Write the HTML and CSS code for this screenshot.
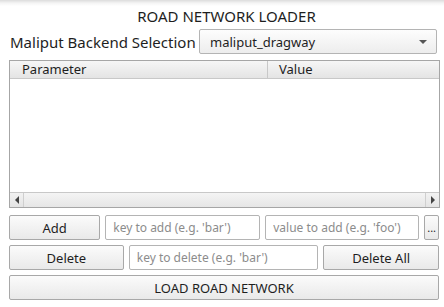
FILE: index.html
```html
<!DOCTYPE html>
<html>
<head>
<meta charset="utf-8">
<link rel="stylesheet" href="styles.css">
</head>
<body>
<div class="app">
  <div class="title">ROAD NETWORK LOADER</div>
  <div class="backend-row">
    <span class="backend-label">Maliput Backend Selection</span>
    <div class="combo">
      <span class="combo-text">maliput_dragway</span>
      <span class="combo-arrow"></span>
    </div>
  </div>
  <div class="table">
    <div class="thead">
      <div class="th th-param">Parameter</div>
      <div class="th th-value">Value</div>
    </div>
    <div class="tbody"></div>
    <div class="hscroll">
      <div class="sbtn"><span class="arr-left"></span></div>
      <div class="strack"></div>
      <div class="sbtn sbtn-right"><span class="arr-right"></span></div>
    </div>
  </div>
  <div class="row">
    <button class="btn btn-add">Add</button>
    <input class="field field-key" placeholder="key to add (e.g. 'bar')">
    <input class="field field-val" placeholder="value to add (e.g. 'foo')">
    <button class="btn btn-dots">...</button>
  </div>
  <div class="row">
    <button class="btn btn-del">Delete</button>
    <input class="field field-delkey" placeholder="key to delete (e.g. 'bar')">
    <button class="btn btn-delall">Delete All</button>
  </div>
  <div class="row">
    <button class="btn btn-load">LOAD ROAD NETWORK</button>
  </div>
</div>
</body>
</html>
```
FILE: styles.css
```css
html, body {
  margin: 0;
  padding: 0;
  width: 444px;
  height: 307px;
  overflow: hidden;
  background: linear-gradient(to bottom, #dcdcdc 0px, #f4f4f4 3px, #ffffff 6px, #ffffff 100%);
  font-family: "Noto Sans", "DejaVu Sans", sans-serif;
  color: #1e1e1e;
}
.app {
  display: flex;
  flex-direction: column;
  padding: 8px 4px 0 9px;
}
.title {
  text-align: center;
  font-size: 15px;
  line-height: 16px;
  height: 16px;
  margin-right: -4px;
}
.backend-row {
  display: flex;
  align-items: center;
  margin-top: 5px;
  height: 25px;
}
.backend-label {
  font-size: 15px;
  margin-left: 1px;
  width: 190px;
  white-space: nowrap;
}
.combo {
  width: 218px;
  height: 23px;
  border: 1px solid #b4b4b4;
  border-radius: 2px;
  background: linear-gradient(to bottom, #fdfdfd, #ededed);
  display: flex;
  align-items: center;
  justify-content: space-between;
  padding: 0 9px 0 10px;
  box-sizing: content-box;
  margin-right: 3px;
}
.combo-text {
  font-size: 13px;
}
.combo-arrow {
  width: 0;
  height: 0;
  border-left: 4px solid transparent;
  border-right: 4px solid transparent;
  border-top: 4px solid #555;
}
.table {
  margin-top: 6px;
  height: 146px;
  border: 1px solid #a6a6a6;
  display: flex;
  flex-direction: column;
  background: #fff;
}
.thead {
  display: flex;
  height: 17px;
  border-bottom: 1px solid #c8c8c8;
  background: linear-gradient(to bottom, #f6f6f6, #e4e4e4);
}
.th {
  font-size: 13px;
  line-height: 17px;
}
.th-param {
  width: 245px;
  padding-left: 12px;
  border-right: 1px solid #c8c8c8;
}
.th-value {
  padding-left: 11px;
  flex: 1;
}
.tbody {
  flex: 1;
}
.hscroll {
  height: 14px;
  display: flex;
  border-top: 1px solid #c8c8c8;
  background: linear-gradient(to bottom, #eeeeee, #e2e2e2);
}
.sbtn {
  width: 13px;
  display: flex;
  align-items: center;
  justify-content: center;
  background: linear-gradient(to bottom, #f2f2f2, #e4e4e4);
  border-right: 1px solid #cfcfcf;
}
.sbtn-right {
  border-right: none;
  border-left: 1px solid #cfcfcf;
}
.strack {
  flex: 1;
  background: linear-gradient(to bottom, #f4f4f4, #e6e6e6);
}
.arr-left {
  width: 0;
  height: 0;
  border-top: 4px solid transparent;
  border-bottom: 4px solid transparent;
  border-right: 4px solid #444;
}
.arr-right {
  width: 0;
  height: 0;
  border-top: 4px solid transparent;
  border-bottom: 4px solid transparent;
  border-left: 4px solid #444;
}
.row {
  display: flex;
  height: 25px;
  margin-top: 7px;
  gap: 5px;
  margin-right: 1px;
}
.row + .row {
  margin-top: 5px;
}
.btn {
  font-family: "Noto Sans", "DejaVu Sans", sans-serif;
  font-size: 13px;
  color: #1e1e1e;
  border: 1px solid #a8a8a8;
  border-radius: 2px;
  background: linear-gradient(to bottom, #fbfbfb, #e9e9e9);
  padding: 0;
  height: 25px;
  margin: 0;
}
.field {
  font-family: "Noto Sans", "DejaVu Sans", sans-serif;
  font-size: 12px;
  border: 1px solid #b4b4b4;
  border-radius: 2px;
  height: 25px;
  box-sizing: border-box;
  padding: 0 0 0 7px;
  margin: 0;
  background: #fff;
  outline: none;
}
.field::placeholder {
  color: #8c8c8c;
}
.btn-add { width: 93px; }
.field-key { width: 155px; }
.field-val { width: 154px; }
.btn-dots { width: 15px; font-size: 11px; }
.btn-del { width: 115px; }
.field-delkey { width: 190px; }
.btn-delall { width: 116px; }
.btn-load { width: 431px; }
```
